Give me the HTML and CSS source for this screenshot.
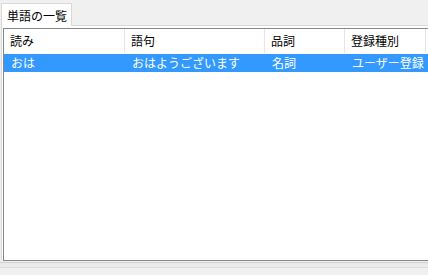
FILE: index.html
```html
<!DOCTYPE html>
<html lang="ja">
<head>
<meta charset="UTF-8">
<title>単語の一覧</title>
<link rel="stylesheet" href="styles.css">
</head>
<body>

<div class="tabs">
    <div class="tab">単語の一覧</div>
</div>

<div class="panel">
    <div class="list">
        <div class="row header">
            <div class="cell">読み</div>
            <div class="cell">語句</div>
            <div class="cell">品詞</div>
            <div class="cell">登録種別</div>
            <div class="cell"></div>
        </div>
        <div class="row selected">
            <div class="cell">おは</div>
            <div class="cell">おはようございます</div>
            <div class="cell">名詞</div>
            <div class="cell">ユーザー登録</div>
            <div class="cell"></div>
        </div>
    </div>
</div>

<div class="status"></div>

</body>
</html>
```

FILE: styles.css
```css
/* word list window */
body {
    font-family: "Noto Sans CJK JP", "Noto Sans", sans-serif;
    font-size: 12px;
    margin: 0;
    padding: 0;
    background-color: #f0f0f0;
    color: #000;
    width: 428px;
    height: 275px;
    overflow: hidden;
}

.tabs {
    display: flex;
    padding: 2px 0 0 1px;
    height: 25px;
    box-sizing: border-box;
}

.tab {
    background-color: #fff;
    border: 1px solid #d9d9d9;
    border-bottom: none;
    width: 71px;
    box-sizing: border-box;
    padding-left: 5px;
    line-height: 23px;
    position: relative;
    top: 1px;
}

.panel {
    background-color: #fff;
    border-top: 1px solid #d9d9d9;
    border-left: 1px solid #d9d9d9;
    margin-left: 1px;
    padding: 2px 0 0 1px;
    height: 235px;
    box-sizing: border-box;
}

.list {
    border: 1px solid #828790;
    border-right: none;
    height: 233px;
    box-sizing: border-box;
    background-color: #fff;
}

.row {
    display: grid;
    grid-template-columns: 121px 140px 80px 81px 1fr;
}

.header {
    height: 24px;
    line-height: 24px;
    margin-bottom: 1px;
}

.header .cell {
    border-right: 1px solid #e5e5e5;
}

.header .cell:last-child {
    border-right: none;
}

.cell {
    padding-left: 6px;
    white-space: nowrap;
    overflow: hidden;
}

.selected {
    background-color: #3399ff;
    color: #fff;
    height: 18px;
    line-height: 18px;
}

.selected .cell {
    padding-left: 7px;
}

.status {
    height: 4px;
    border-top: 1px solid #cfcfcf;
    border-bottom: 1px solid #dcdcdc;
    background-color: #eaeaea;
    margin-top: 2px;
}
```
